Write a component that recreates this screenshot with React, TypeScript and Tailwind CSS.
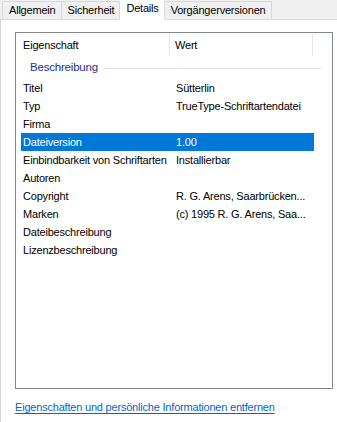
const rows: [string, string][] = [
  ["Titel", "Sütterlin"],
  ["Typ", "TrueType-Schriftartendatei"],
  ["Firma", ""],
  ["Dateiversion", "1.00"],
  ["Einbindbarkeit von Schriftarten", "Installierbar"],
  ["Autoren", ""],
  ["Copyright", "R. G. Arens, Saarbrücken..."],
  ["Marken", "(c) 1995 R. G. Arens, Saa..."],
  ["Dateibeschreibung", ""],
  ["Lizenzbeschreibung", ""],
];

const tabs = ["Allgemein", "Sicherheit", "Details", "Vorgängerversionen"];

export default function App() {
  return (
    <div className="w-[337px] h-[422px] bg-white overflow-hidden text-[11px] leading-none tracking-[-0.2px] text-black font-['Liberation_Sans',Arial,sans-serif]">
      {/* tab strip */}
      <div className="h-[20px] bg-[#f0f0f0] border-b border-[#d9d9d9] flex items-end pl-[2px]">
        {tabs.map((t) => {
          const active = t === "Details";
          return active ? (
            <div key={t} className="h-[21px] -mb-px bg-white px-[6px] flex items-center pb-[3px]">
              {t}
            </div>
          ) : (
            <div key={t} className="h-[18px] bg-[#f0f0f0] border border-b-0 border-[#d9d9d9] pl-[6px] pr-[5px] flex items-center -ml-px first:ml-0">
              {t}
            </div>
          );
        })}
      </div>

      {/* panel */}
      <div className="h-[402px] border-l border-[#d9d9d9] pl-[14px] pt-[12px]">
        <div className="w-[318px] h-[357px] border border-[#828790] flex flex-col">
          {/* header */}
          <div className="h-[24px] flex items-stretch">
            <div className="w-[154px] pl-[7px] flex items-center border-r border-[#e5e5e5] my-[1px]">Eigenschaft</div>
            <div className="w-[143px] pl-[5px] flex items-center border-r border-[#e5e5e5] my-[1px]">Wert</div>
          </div>
          {/* group */}
          <div className="h-[22px] flex items-center pl-[14px] pr-[10px] gap-[5px]">
            <span className="text-[#1e3296] text-[11.5px]">Beschreibung</span>
            <div className="flex-1 h-px bg-[#e2e5ea]" />
          </div>
          {/* rows */}
          <div className="pl-[5px] flex flex-col">
            {rows.map(([k, v]) => {
              const sel = k === "Dateiversion";
              return (
                <div
                  key={k}
                  className={`w-[293px] h-[18px] grid grid-cols-[155px_1fr] items-center ${sel ? "bg-[#0078d7] text-white" : ""}`}
                >
                  <span className="pl-[2px] whitespace-nowrap">{k}</span>
                  <span className="whitespace-nowrap">{v}</span>
                </div>
              );
            })}
          </div>
        </div>
        <div className="mt-[13px]">
          <a href="#" className="text-[#0066cc] underline underline-offset-[2px]">
            Eigenschaften und persönliche Informationen entfernen
          </a>
        </div>
      </div>
    </div>
  );
}
